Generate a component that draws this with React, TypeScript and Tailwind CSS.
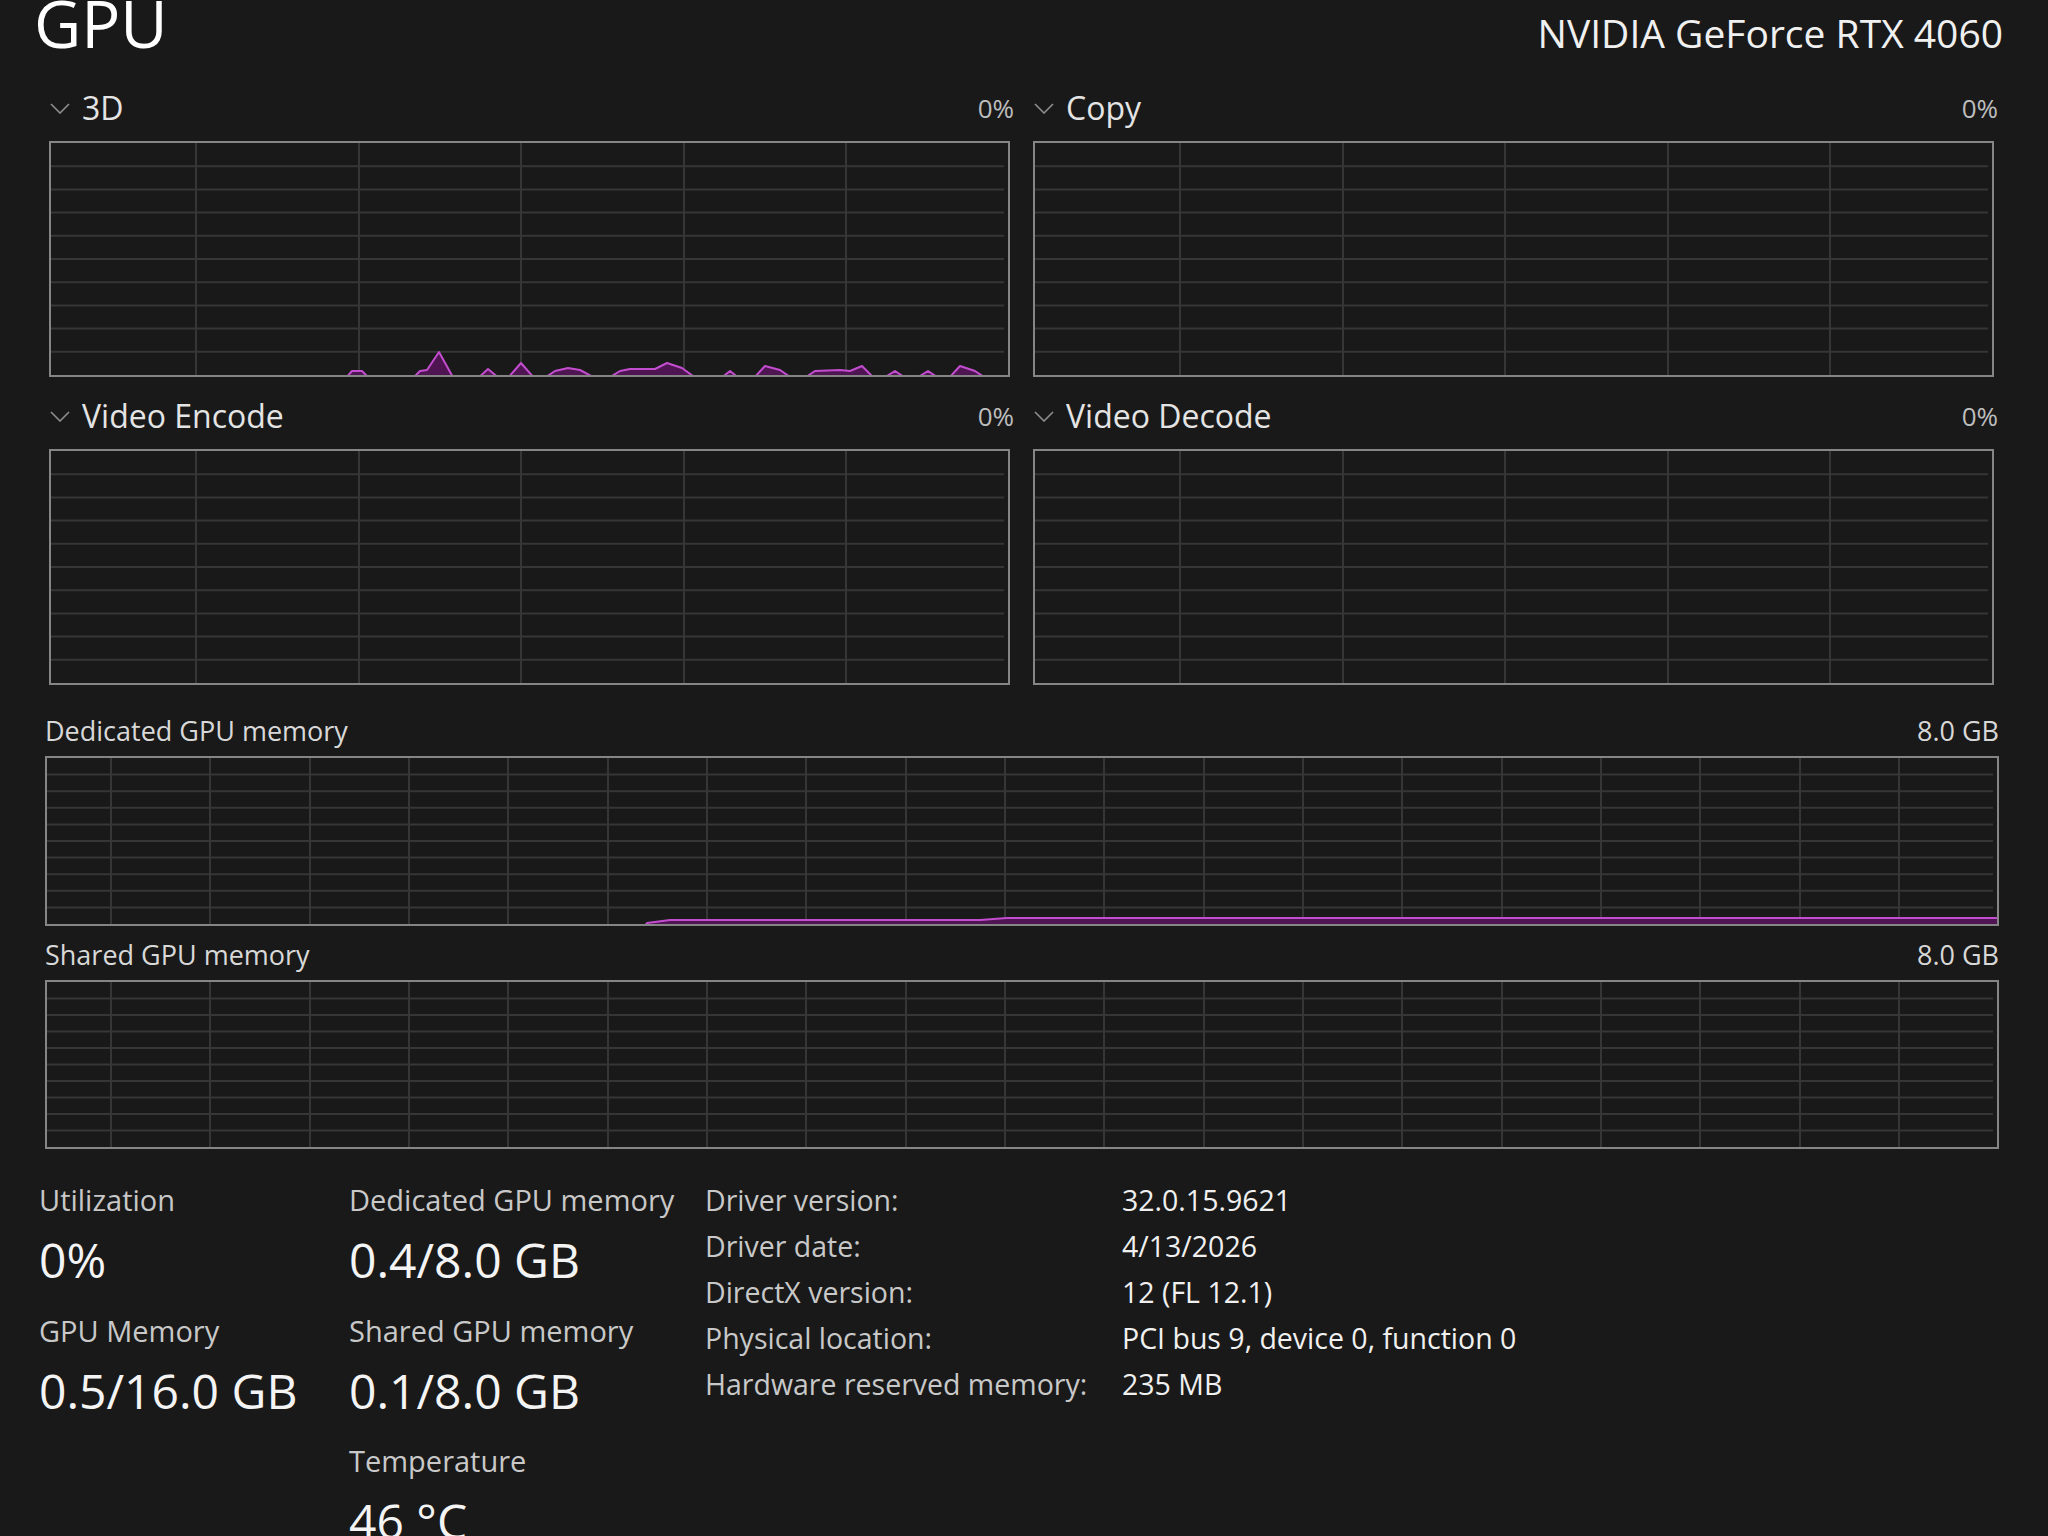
import React from "react";

// colours taken from the task manager dark theme
const LINE = "#c34dcf";
const FILL = "#4f1553";
const GRID = "#363636";

type Pt = [number, number];

// 3D engine activity, [x on page, height above floor]
const threeD: [number, number][] = [
    [345, 0], [352, 2], [362, 2], [370, 0], [412, 0], [420, 2], [427, 3], [439, 21], [454, 0],
    [477, 0], [488, 4], [500, 0], [507, 0], [521, 10], [535, 0], [543, 0], [555, 2], [568, 5],
    [580, 3], [597, 0], [607, 0], [620, 2], [630, 4], [655, 4], [667, 10], [682, 5], [697, 0],
    [720, 0], [730, 2], [740, 0], [753, 0], [765, 7], [780, 3], [793, 0], [803, 0], [815, 2],
    [840, 3], [850, 2], [862, 7], [875, 0], [882, 0], [895, 2], [907, 0], [915, 0], [928, 2],
    [940, 0], [948, 0], [960, 7], [975, 2], [987, 0],
];

function toChart(points: [number, number][], left: number, floor: number, hidden: number): Pt[] {
    return points.map(([x, h]) => [x - left, h > 0 ? floor - h : hidden]);
}

const dedicatedLine: Pt[] = [
    [596, 170], [600, 165], [623, 162], [933, 162], [960, 160], [1952, 160], [1952, 170],
];

function Chart({ w, h, firstCol, colStep, data }: { w: number; h: number; firstCol: number; colStep: number; data?: Pt[] }) {
    const rows = Array.from({ length: 9 }, (_, i) => ((i + 1) * h) / 10);
    const cols: number[] = [];
    for (let x = firstCol; x < w - 4; x += colStep) cols.push(Math.round(x));

    return (
        <svg className="block h-full w-full" viewBox={`0 0 ${w} ${h}`} preserveAspectRatio="none">
            {rows.map((y) => (
                <line key={"r" + y} x1={0} x2={w - 4} y1={y} y2={y} stroke={GRID} strokeWidth={2} />
            ))}
            {cols.map((x) => (
                <line key={"c" + x} x1={x} x2={x} y1={0} y2={h} stroke={GRID} strokeWidth={2} />
            ))}
            {data && (
                <polygon
                    points={data.map((p) => p.join(",")).join(" ")}
                    fill={FILL}
                    stroke={LINE}
                    strokeWidth={2}
                    strokeLinejoin="round"
                />
            )}
        </svg>
    );
}

function Chevron() {
    return (
        <svg width="20" height="11" viewBox="0 0 20 11" className="ml-[1px] shrink-0">
            <path d="M1 1 L10 10 L19 1" stroke="#8e8e8e" strokeWidth="1.6" fill="none" />
        </svg>
    );
}

function EnginePanel({ title, data }: { title: string; data?: Pt[] }) {
    return (
        <div>
            <div className="flex h-[66px] items-center justify-between">
                <div className="flex items-center">
                    <Chevron />
                    <span className="ml-[12px] text-[32px] text-[#e4e4e4]">{title}</span>
                </div>
                <span className="-mr-[4px] text-[26px] text-[#bdbdbd]">0%</span>
            </div>
            <div className="h-[236px] border-2 border-[#858585]">
                <Chart w={957} h={232} firstCol={145} colStep={162.5} data={data} />
            </div>
        </div>
    );
}

function MemoryPanel({ title, height, data }: { title: string; height: string; data?: Pt[] }) {
    return (
        <div>
            <div className="flex h-[50px] items-center justify-between text-[27px] text-[#d8d8d8]">
                <span>{title}</span>
                <span>8.0 GB</span>
            </div>
            <div className={`${height} border-2 border-[#858585]`}>
                <Chart w={1950} h={166} firstCol={64} colStep={99.33} data={data} />
            </div>
        </div>
    );
}

function Stat({ label, value, className = "" }: { label: string; value: string; className?: string }) {
    return (
        <div className={className}>
            <div className="flex h-[40px] items-center text-[29px] text-[#c8c8c8]">{label}</div>
            <div className="mt-[10px] flex h-[60px] items-center text-[48px] text-[#f4f4f4]">{value}</div>
        </div>
    );
}

const details = [
    ["Driver version:", "32.0.15.9621"],
    ["Driver date:", "4/13/2026"],
    ["DirectX version:", "12 (FL 12.1)"],
    ["Physical location:", "PCI bus 9, device 0, function 0"],
    ["Hardware reserved memory:", "235 MB"],
];

export default function App() {
    return (
        <div className="h-[1536px] w-[2048px] overflow-hidden bg-[#191919] font-['Open_Sans','Noto_Sans',sans-serif]">
            <div className="-mt-[9px] flex h-[84px] items-baseline justify-between pl-[34px] pr-[45px]">
                <h1 className="text-[65px] font-normal leading-none text-white">GPU</h1>
                <span className="text-[39px] leading-none text-[#f0f0f0]">NVIDIA GeForce RTX 4060</span>
            </div>

            <div className="grid grid-cols-2 gap-x-[23px] gap-y-[6px] pl-[49px] pr-[54px]">
                <EnginePanel title="3D" data={toChart(threeD, 51, 230, 236)} />
                <EnginePanel title="Copy" />
                <EnginePanel title="Video Encode" />
                <EnginePanel title="Video Decode" />
            </div>

            <div className="mt-[21px] pl-[45px] pr-[49px]">
                <MemoryPanel title="Dedicated GPU memory" height="h-[170px]" data={dedicatedLine} />
                <div className="mt-[4px]">
                    <MemoryPanel title="Shared GPU memory" height="h-[169px]" />
                </div>
            </div>

            <div className="mt-[31px] flex pl-[39px]">
                <div className="w-[310px] shrink-0">
                    <Stat label="Utilization" value="0%" />
                    <Stat label="GPU Memory" value="0.5/16.0 GB" className="mt-[21px]" />
                </div>
                <div className="w-[356px] shrink-0">
                    <Stat label="Dedicated GPU memory" value="0.4/8.0 GB" />
                    <Stat label="Shared GPU memory" value="0.1/8.0 GB" className="mt-[21px]" />
                    <Stat label="Temperature" value="46 °C" className="mt-[20px]" />
                </div>
                <div className="-mt-[3px]">
                    {details.map(([k, v]) => (
                        <div key={k} className="grid h-[46px] grid-cols-[417px_auto] items-center text-[28.5px]">
                            <span className="text-[#c8c8c8]">{k}</span>
                            <span className="text-[#f0f0f0]">{v}</span>
                        </div>
                    ))}
                </div>
            </div>
        </div>
    );
}
